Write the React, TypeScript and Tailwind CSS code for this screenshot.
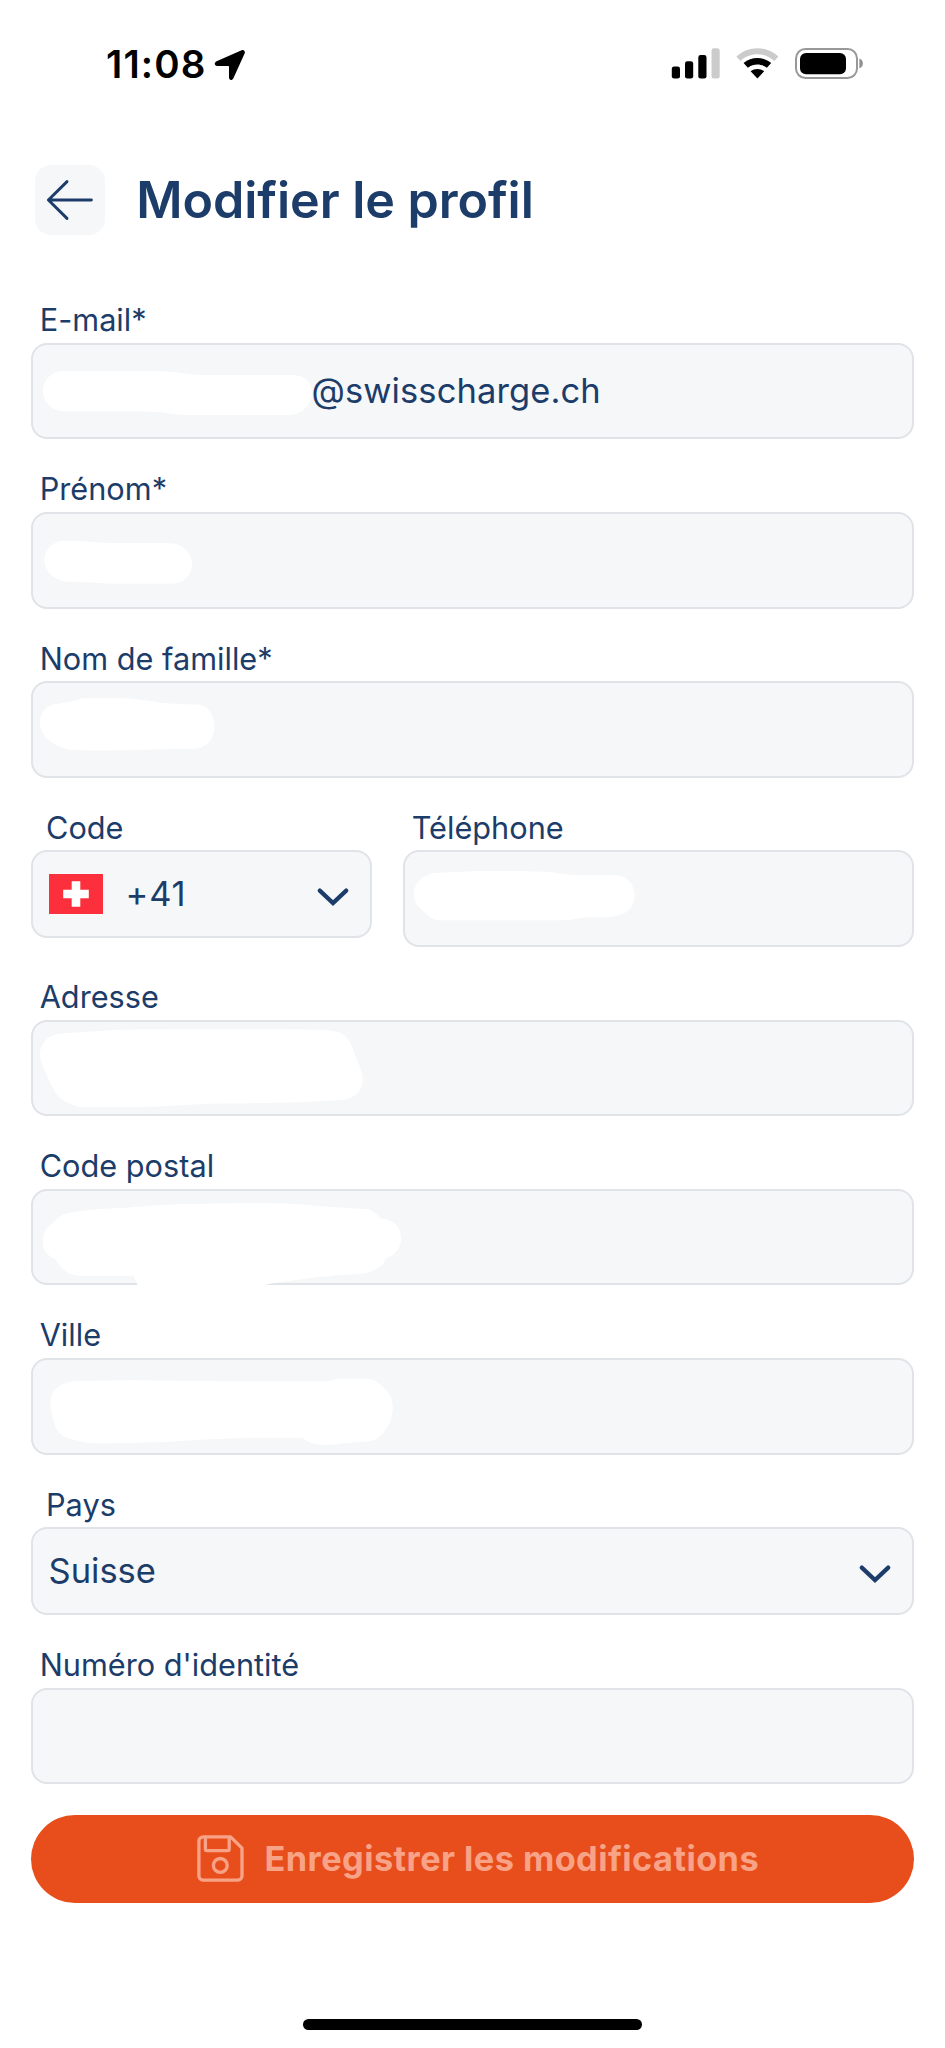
import type { ReactNode } from "react";

const boxClass = "relative flex w-full items-center rounded-[16px] border-2 border-[#e0e3e7] bg-[#f5f7f9] text-[34.5px] leading-[44px]";

// Hand-drawn cover over a private value; coordinates start at the box's outer corner.
function Cover({ d }: { d: string }) {
  return (
    <svg className="absolute -top-[2px] -left-[2px] h-[97px] w-[480px] overflow-visible" viewBox="0 0 480 97" fill="#fff" aria-hidden="true">
      <path d={d} />
    </svg>
  );
}

function Field({ label, cover, children }: { label: string; cover?: string; children?: ReactNode }) {
  return (
    <div className="flex w-full flex-col">
      <label className="h-[40.6px] pl-[8.7px] text-[30.7px] leading-[36px]">{label}</label>
      <div className={boxClass + " h-[96.6px]"}>
        {cover && <Cover d={cover} />}
        {children}
      </div>
    </div>
  );
}

function Select({ label, children }: { label: string; children: ReactNode }) {
  return (
    <div className="flex w-full flex-col">
      <label className="h-[40.6px] pl-[15px] text-[30.7px] leading-[36px]">{label}</label>
      <div className={boxClass + " h-[88px] justify-between pl-[15.5px] pr-[21px]"}>
        {children}
        <Chevron />
      </div>
    </div>
  );
}

function Chevron() {
  return (
    <svg className="mt-[4px] h-[19px] w-[32px]" viewBox="0 0 32 19" fill="none" stroke="#1c3c69" strokeWidth="4.2" strokeLinecap="round">
      <path d="M2.8 3.6 16 16 29.2 3.6" strokeLinejoin="miter" />
    </svg>
  );
}

function StatusBar() {
  return (
    <div className="flex h-[128px] items-center pr-[81.5px] pl-[106px] text-black">
      <span className="text-[38.5px] leading-[44px] font-semibold tracking-[1.1px]">11:08</span>
      <svg className="ml-[7.5px] h-[32px] w-[32px]" viewBox="0 -1 32 32" fill="#000">
        <path d="M27.6 1.2C29.8.2 31.6 2.3 30.6 4.4L19.4 29.2C18.3 31.8 15 31.5 15 28.6V18.1C15 17.3 14.7 17 13.9 17H3.3C.3 17 -.2 13.5 2.6 12.2Z" />
      </svg>
      <svg className="ml-auto h-[32px] w-[193px]" viewBox="670 48 193 32">
        <rect x="670.8" y="66.4" width="8.2" height="12.2" rx="2.4" />
        <rect x="684" y="61.2" width="8.2" height="17.4" rx="2.4" />
        <rect x="697.3" y="55" width="8.2" height="23.6" rx="2.4" />
        <rect x="710.5" y="48.3" width="8.2" height="30.3" rx="2.4" fill="#cbcbcb" />
        <path d="M735.4 56.6C747.2 45.4 765.6 45.4 777.4 56.6L773.3 60.9C763.8 52 749 52 739.5 60.9Z" fill="#cbcbcb" />
        <path d="M742.6 63C750.6 56.3 762.2 56.3 770.2 63L765.9 67.8C760.2 63.4 752.6 63.4 746.9 67.8Z" />
        <path d="M749.6 71.2C753.6 68.3 759.2 68.3 763.2 71.2L756.4 78.6Z" />
        <rect x="795" y="49" width="61" height="29" rx="9.4" fill="none" stroke="#989898" strokeWidth="2" />
        <rect x="799" y="53" width="46" height="21.2" rx="6" />
        <path d="M858.4 58.6C863 60 863 67 858.4 68.4Z" fill="#8f8f8f" />
      </svg>
    </div>
  );
}

export default function App() {
  return (
    <div className="flex h-[2048px] w-[945px] flex-col bg-white font-['Inter',sans-serif] text-[#1c3c69]">
      <StatusBar />

      <header className="mt-[37px] flex h-[70px] items-center pl-[35.3px]">
        <button className="flex h-[70px] w-[70px] items-center justify-center rounded-[16px] bg-[#f5f7f9]">
          <svg className="h-[42px] w-[48px]" viewBox="0 0 48 42" fill="none" stroke="#1c3c69" strokeWidth="2.9" strokeLinecap="round" strokeLinejoin="round">
            <path d="M21 2.6 2.4 21 21 39.4M2.4 21H45.4" />
          </svg>
        </button>
        <h1 className="ml-[31px] text-[50.2px] leading-[60px] font-semibold tracking-[-0.07px]">Modifier le profil</h1>
      </header>

      <form className="mt-[67.3px] flex flex-col gap-[32px] pr-[31px] pl-[31px]">
        <Field
          label="E-mail*"
          cover="M32 28C70 28 95 28 125 28C146 28 156 32 176 32L261 32C273 32 281 39 281 49C281 62 271 72 256 72L159 72C141 72 134 68.5 114 68.5L36 68.5C21 68.5 12 59 12 48C12 37 21 28 32 28Z"
        >
          <span className="relative pl-[278.5px] tracking-[0.1px]">@swisscharge.ch</span>
        </Field>
        <Field
          label="Prénom*"
          cover="M34 28.7C54 28.7 64 31 90 31L139 31.3C152 31.3 161 41 161 52.5C161 63 153 71.7 141 71.7L78 71.7C60 70 50 70.5 38 69.7C24 69.7 13.5 60 13.5 48C13.5 37 22 28.7 34 28.7Z"
        />
        <Field
          label="Nom de famille*"
          cover="M24 23C36 22 44 20 52 17.3C70 17 84 17 96 17.3C115 19 128 22 146 23L166 23.4C177 24 183.5 34 183.5 45C183.5 57 176 68 162 67.7L128 68.3C110 69.3 60 70 41 69C30 67 24 64 19 60C4 50 6 26 24 23Z"
        />

        <div className="flex items-start gap-[31px]">
          <div className="w-[341px]">
            <Select label="Code">
              <div className="flex items-center">
                <svg className="ml-[0.5px] h-[40px] w-[54px]" viewBox="0 0 54 40">
                  <path d="M0 0H54V40H0Z" fill="#fc303c" />
                  <path d="M22.7 7.2H31.3V15.7H39.8V24.3H31.3V32.8H22.7V24.3H14.2V15.7H22.7Z" fill="#fff" />
                </svg>
                <span className="ml-[22.5px] tracking-[0.8px]">+41</span>
              </div>
            </Select>
          </div>
          <div className="min-w-0 flex-1">
            <Field
              label="Téléphone"
              cover="M33 23C46 22 55 22 64 21.4C90 20.7 118 21 139 21.7C156 22.5 164 25 177 25.3L213 25.3C224 26 231.6 34 231.6 46C231.6 57 223 65 212 66C205 68 196 67 185 67.3C174 68.3 170 70 162 70.3L36 70.3C28 70 24 64 20 61C3 48 11 25 33 23Z"
            />
          </div>
        </div>

        <Field
          label="Adresse"
          cover="M26 14C46 12 70 11 86 9.7C140 9 240 9 286 9.7C298 10 305 11 310 13C319 18 322 29 326 40C330 49 331.7 54 331.7 60C331.7 71 323 79 311 80C270 83 225 83.4 176 83.7C150 85 120 87 96 87.3L52 87.3C46 87 43 85 40 83.7C28 81 24 72 19 62C16 55 14 52 11 44C5 31 12 17 26 14Z"
        />
        <Field
          label="Code postal"
          cover="M42 23.3C58 20 76 19.7 96 18.7C115 17 130 16 146 15.3C190 14 235 14 259 14.7C290 17 315 19 336 20C341 21 346 25 349.7 29.7C362 29 370.3 39 370.3 49.3C370.3 59 364 66 355 69.7C350 80 340 83 331 85L312 85.7C295 87 270 90 252 92.7C243 94 238 95 229 96.8V99H110C106 96 104 92 103 86.7H47C36 86 28 77 24.5 70.3C15 66 11.7 60 11.7 52.7C11.7 44 16 38 22 33.7C28 28 33 24 42 23.3Z"
        />
        <Field
          label="Ville"
          cover="M46 23C80 22 115 22 149 22.7C200 23.5 250 23.3 296 23.3C301 23 303 20.7 309 20.7H336C344 21 347 25 350 27C358 34 361.7 39 361.7 50C361.7 60 358 68 352 75C346 82 341 83 335 83.7C322 84.7 314 84.5 305 86.3C292 87.5 280 87.5 271.7 80H216C190 80.5 165 82 136 84C110 84.4 80 86 60 85.2C50 84 40 81 34 79C22 72 22 60 19.5 47C18 32 30 24 46 23Z"
        />
        <Select label="Pays">
          <span>Suisse</span>
        </Select>
        <Field label="Numéro d'identité" />
      </form>

      <div className="mt-[30.2px] px-[31px]">
        <button className="flex h-[88px] w-full items-center rounded-full bg-[#e84e1b] pl-[166px] text-[#f8a388]">
          <svg className="h-[47px] w-[47px]" viewBox="0 0 47 47" fill="none" stroke="currentColor" strokeWidth="3.3" strokeLinejoin="round">
            <path d="M6 1.9H33.6L45 13.2V41A4.2 4.2 0 0 1 40.8 45.1H6A4.2 4.2 0 0 1 1.9 41V6A4.2 4.2 0 0 1 6 1.9Z" />
            <path d="M8.4 1.9V14.2A1.4 1.4 0 0 0 9.8 15.6H30.8A1.4 1.4 0 0 0 32.2 14.2V1.9" />
            <circle cx="23.3" cy="30.4" r="6.9" />
          </svg>
          <span className="ml-[20.5px] text-[34.3px] leading-[44px] font-bold tracking-[0.45px] whitespace-nowrap">Enregistrer les modifications</span>
        </button>
      </div>

      <div className="mx-auto mt-auto mb-[18px] h-[11px] w-[339px] rounded-full bg-black" />
    </div>
  );
}
